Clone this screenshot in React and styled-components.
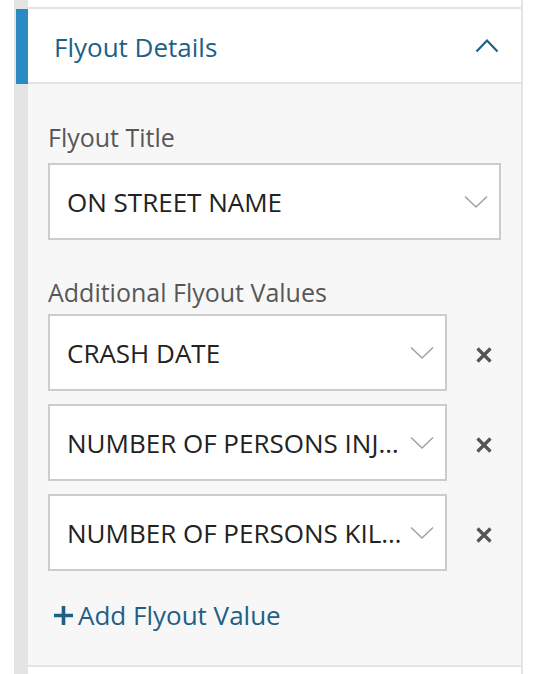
import React from "react";
import styled, { createGlobalStyle } from "styled-components";

const GlobalStyle = createGlobalStyle`
  body {
    margin: 0;
    background: #ffffff;
    font-family: "Open Sans", "Noto Sans", sans-serif;
  }
`;

const Panel = styled.div`
  margin-left: 14px;
  width: 509px;
  display: flex;
  flex-direction: column;
`;

const Section = styled.div`
  display: flex;
`;

// gray strip on the left; the active section gets a blue marker
const Gutter = styled.div`
  width: 14px;
  flex-shrink: 0;
  background: #e4e4e4;
  padding-left: 2px;
  box-sizing: border-box;
  display: flex;
`;

const Marker = styled.div`
  flex: 1;
  background: #2a8bc4;
`;

const Body = styled.div`
  flex: 1;
  background: ${(p) => p.$bg || "#ffffff"};
  border-right: 2px solid #e4e4e4;
  border-bottom: 2px solid #e4e4e4;
  height: ${(p) => (p.$h ? `${p.$h}px` : "auto")};
`;

const Header = styled.div`
  height: 73px;
  display: flex;
  align-items: center;
  justify-content: space-between;
  padding: 0 22px 0 26px;
`;

const Title = styled.h2`
  margin: 0;
  font-size: 26px;
  font-weight: 400;
  color: #1f5f86;
  padding-top: 2px;
`;

const Content = styled.div`
  padding: 36px 20px 0;
  height: 581px;
  box-sizing: border-box;
  display: flex;
  flex-direction: column;
`;

const FieldLabel = styled.div`
  font-size: 25px;
  line-height: 35px;
  color: #575757;
  margin-top: ${(p) => p.$mt || 0}px;
  margin-bottom: ${(p) => p.$mb || 0}px;
`;

const Row = styled.div`
  display: flex;
  align-items: center;
  gap: 20px;
  margin-bottom: 13px;
`;

const Select = styled.div`
  flex: ${(p) => (p.$full ? 1 : "none")};
  width: ${(p) => (p.$full ? "auto" : "399px")};
  height: 77px;
  box-sizing: border-box;
  border: 2px solid #cccccc;
  background: #ffffff;
  display: flex;
  align-items: center;
  padding: 0 11px 0 17px;
  gap: 8px;
`;

const SelectText = styled.span`
  flex: 1;
  min-width: 0;
  font-size: 26px;
  color: #222222;
  white-space: nowrap;
  overflow: hidden;
  text-overflow: ellipsis;
`;

const RemoveButton = styled.button`
  width: 34px;
  height: 34px;
  margin-top: 5px;
  border: none;
  background: none;
  padding: 0;
  display: flex;
  align-items: center;
  justify-content: center;
  cursor: pointer;
`;

const AddButton = styled.button`
  margin-top: 13px;
  align-self: flex-start;
  border: none;
  background: none;
  padding: 0 0 0 5px;
  display: flex;
  align-items: center;
  gap: 4px;
  font-family: inherit;
  font-size: 26px;
  color: #1f5f86;
  cursor: pointer;
`;

const ChevronDown = () => (
  <svg width="24" height="14" viewBox="0 0 24 14">
    <path d="M1 1.5 L12 12 L23 1.5" fill="none" stroke="#a3a3a3" strokeWidth="1.6" />
  </svg>
);

const ChevronUp = () => (
  <svg width="24" height="15" viewBox="0 0 24 15">
    <path d="M1.5 13.5 L12 2.5 L22.5 13.5" fill="none" stroke="#1f5f86" strokeWidth="2.2" />
  </svg>
);

const Cross = () => (
  <svg width="18" height="18" viewBox="0 0 18 18">
    <path d="M2.5 2.5 L15.5 15.5 M15.5 2.5 L2.5 15.5" stroke="#555555" strokeWidth="3.2" />
  </svg>
);

const Plus = () => (
  <svg width="21" height="21" viewBox="0 0 21 21">
    <path d="M10.5 1 V20 M1 10.5 H20" stroke="#1f5f86" strokeWidth="3.6" />
  </svg>
);

const values = [
  "CRASH DATE",
  "NUMBER OF PERSONS INJURED",
  "NUMBER OF PERSONS KILLED",
];

const App = () => {
  return (
    <>
      <GlobalStyle />
      <Panel>
        <Section>
          <Gutter />
          <Body $h={7} />
        </Section>
        <Section>
          <Gutter>
            <Marker />
          </Gutter>
          <Body>
            <Header>
              <Title>Flyout Details</Title>
              <ChevronUp />
            </Header>
          </Body>
        </Section>
        <Section>
          <Gutter />
          <Body $bg="#f7f7f7">
            <Content>
              <FieldLabel $mb={8}>Flyout Title</FieldLabel>
              <Row>
                <Select $full>
                  <SelectText>ON STREET NAME</SelectText>
                  <ChevronDown />
                </Select>
              </Row>
              <FieldLabel $mt={22} $mb={4}>
                Additional Flyout Values
              </FieldLabel>
              {values.map((v) => (
                <Row key={v}>
                  <Select>
                    <SelectText>{v}</SelectText>
                    <ChevronDown />
                  </Select>
                  <RemoveButton aria-label="Remove">
                    <Cross />
                  </RemoveButton>
                </Row>
              ))}
              <AddButton>
                <Plus />
                Add Flyout Value
              </AddButton>
            </Content>
          </Body>
        </Section>
        <Section>
          <Gutter />
          <Body $h={20} />
        </Section>
      </Panel>
    </>
  );
};

export default App;
